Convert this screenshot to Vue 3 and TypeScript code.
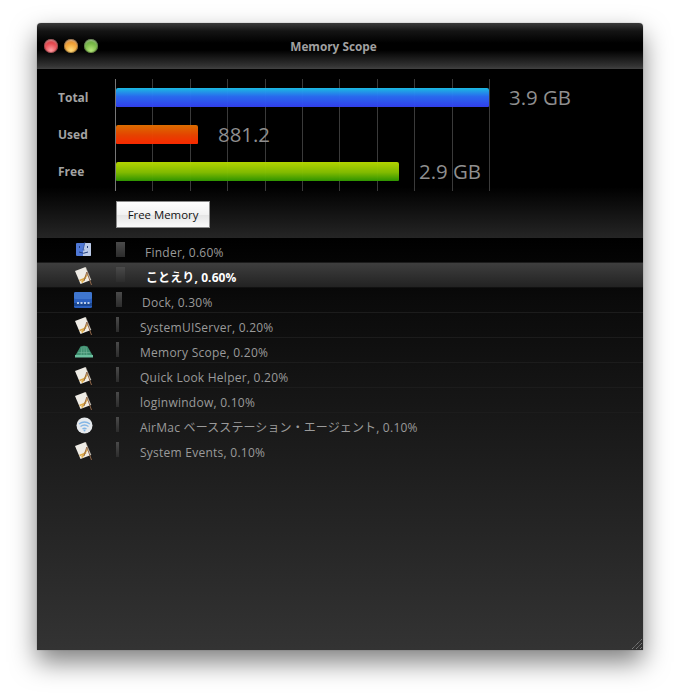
<script setup lang="ts">
interface Row { icon: string; name: string; jp?: string; pct: string; bar: number; pad: number; sel?: boolean }
const rows: Row[] = [
  { icon: 'finder', name: 'Finder', pct: '0.60%', bar: 9, pad: 20 },
  { icon: 'app', name: '', jp: 'ことえり', pct: '0.60%', bar: 9, pad: 21, sel: true },
  { icon: 'dock', name: 'Dock', pct: '0.30%', bar: 6, pad: 20 },
  { icon: 'app', name: 'SystemUIServer', pct: '0.20%', bar: 3, pad: 21 },
  { icon: 'scope', name: 'Memory Scope', pct: '0.20%', bar: 3, pad: 21 },
  { icon: 'app', name: 'Quick Look Helper', pct: '0.20%', bar: 3, pad: 21 },
  { icon: 'app', name: 'loginwindow', pct: '0.10%', bar: 3, pad: 21 },
  { icon: 'airmac', name: 'AirMac ', jp: 'ベースステーション・エージェント', pct: '0.10%', bar: 3, pad: 21 },
  { icon: 'app', name: 'System Events', pct: '0.10%', bar: 3, pad: 21 },
]
const bars = [
  { label: 'Total', cls: 'blue', width: 373, value: '3.9 GB' },
  { label: 'Used', cls: 'red', width: 82, value: '881.2' },
  { label: 'Free', cls: 'green', width: 283, value: '2.9 GB' },
]
const ticks = Array.from({ length: 11 }, (_, i) => i)
const lights = ['r', 'y', 'g']
</script>

<template>
  <div class="page">
    <div class="window">
      <header class="titlebar">
        <div class="lights"><span v-for="l in lights" :key="l" class="light" :class="l"></span></div>
        <div class="title">Memory Scope</div>
      </header>
      <section class="top">
        <div class="chart">
          <div class="labels"><div v-for="b in bars" :key="b.label" class="label">{{ b.label }}</div></div>
          <div class="plot">
            <div class="grid"><i v-for="t in ticks" :key="t" :class="{ first: t === 0 }"></i></div>
            <div class="barrow" v-for="b in bars" :key="b.label">
              <div class="bar" :class="b.cls" :style="{ width: b.width + 'px' }"></div>
              <span class="value">{{ b.value }}</span>
            </div>
          </div>
        </div>
        <button class="btn">Free Memory</button>
      </section>
      <section class="list">
        <div v-for="r in rows" :key="r.name + r.jp" class="row" :class="[{ sel: r.sel }, 'is-' + r.icon]">
          <div class="icon">
            <svg v-if="r.icon === 'finder'" width="15" height="14" viewBox="0 0 15 14">
              <rect x="0" y="1" width="15" height="13" rx="1" fill="#4f78d6"/>
              <path d="M8.500 1H14a1 1 0 0 1 1 1v11a1 1 0 0 1-1 1H7C6.700 10 7.500 5 8.500 1z" fill="#bccbe8"/>
              <path d="M9 0 7 8h1.500" fill="none" stroke="#2b4a94" stroke-width=".8"/>
              <path d="M3.500 4v2M11.500 4v2M3 10q4.500 2.500 9 0" fill="none" stroke="#24407f" stroke-width="1"/>
            </svg>
            <svg v-else-if="r.icon === 'app'" width="20" height="20" viewBox="0 0 20 20">
              <path d="M1 5 11.500 1 17 14 6.500 18z" fill="#efece6"/>
              <path d="M11.500 1 17 14" stroke="#bdb6a8" stroke-width=".5" fill="none"/>
              <path d="M7 16 12.500 8l1.500 1-5.500 8z" fill="#e0b04c"/>
              <path d="M5.500 14.500 12 12" stroke="#d9a644" stroke-width="1.400" fill="none"/>
              <path d="M12.800 6 17.500 19M12.800 6 10 15" fill="none" stroke="#94694a" stroke-width="1"/>
            </svg>
            <svg v-else-if="r.icon === 'dock'" width="18" height="16" viewBox="0 0 18 16">
              <rect x="0" y="0" width="18" height="16" rx="1.500" fill="#2a5fbe"/>
              <rect x="0" y="0" width="18" height="7" rx="1.500" fill="#3f76cf"/>
              <rect x="0" y="11" width="18" height="3" fill="#1c478f"/>
              <path d="M3 10h2v2H3zM6.500 10h2v2h-2zM10 10h2v2h-2zM13.500 10h2v2h-2z" fill="#b9cce8"/>
            </svg>
            <svg v-else-if="r.icon === 'scope'" width="18" height="13" viewBox="0 0 18 13">
              <path d="M0 11 5.500 1.500Q9 0 12.500 1.500L18 11z" fill="#3f8f70"/>
              <path d="M6 11 7 2M9 11V1.500M12 11 11 2M3 7.500h12" stroke="#76b79c" stroke-width=".6" fill="none"/>
              <rect x="0" y="10" width="18" height="2.500" fill="#6bc09f"/>
            </svg>
            <svg v-else width="17" height="17" viewBox="0 0 17 17">
              <circle cx="8.500" cy="8.500" r="8" fill="#e6e9ec"/>
              <path d="M3 7Q8.500 3 14 7M4.500 9.500q4-3 8 0M6.500 12q2-1.500 4 0" fill="none" stroke="#83b6e6" stroke-width="1.300"/>
              <circle cx="8.500" cy="13.500" r="1" fill="#83b6e6"/>
            </svg>
          </div>
          <div class="cell">
            <div class="pbar" :style="{ width: r.bar + 'px' }"></div>
            <div class="text" :style="{ paddingLeft: r.pad + 'px' }">{{ r.name }}<span v-if="r.jp" class="jp">{{ r.jp }}</span>, {{ r.pct }}</div>
          </div>
        </div>
        <svg class="grip" width="12" height="12" viewBox="0 0 12 12">
          <path d="M1 11 11 1M5 11l6-6M9 11l2-2" stroke="#8a8a8a" stroke-width="1" fill="none" stroke-dasharray="1.200 .6"/>
        </svg>
      </section>
    </div>
  </div>
</template>

<style>
html, body { background: #fff; margin: 0; }
</style>

<style scoped>
.page {
  height: 700px;
  padding: 23px 0 0 37px;
  box-sizing: border-box;
  overflow: hidden;
}
.window {
  position: relative;
  width: 606px;
  height: 627px;
  display: flex;
  flex-direction: column;
  border-radius: 4px 4px 0 0;
  box-shadow: 0 12px 26px rgba(0, 0, 0, 0.5), 0 0 1px rgba(0, 0, 0, 0.6);
  font-family: "Open Sans", "Noto Sans CJK JP", sans-serif;
  overflow: hidden;
}
.titlebar {
  height: 46px;
  flex: none;
  display: flex;
  align-items: center;
  position: relative;
  box-sizing: border-box;
  background: linear-gradient(#3a3a3a 0, #141414 8px, #000 20px, #000 27px, #333 43px, #3c3c3c 45px, #444 46px);
}
.lights { display: flex; gap: 6px; padding-left: 7px; }
.light {
  width: 14px;
  height: 14px;
  border-radius: 50%;
  box-shadow: inset 0 0 0 1px rgba(0, 0, 0, 0.3), inset 0 2px 2px rgba(255, 255, 255, 0.45);
}
.light.r { background: radial-gradient(circle at 50% 80%, #ff9da2 0, #e5444b 55%, #a01216 100%); }
.light.y { background: radial-gradient(circle at 50% 80%, #ffdc7c 0, #ee9c30 55%, #a04c0c 100%); }
.light.g { background: radial-gradient(circle at 50% 80%, #b5e57a 0, #72b342 55%, #3c761a 100%); }
.title {
  position: absolute;
  left: 0;
  right: 0;
  top: 15px;
  padding-right: 13px;
  text-align: center;
  font-size: 11.8px;
  font-weight: 700;
  line-height: 16px;
  color: #a0a0a0;
}
.top {
  height: 169px;
  flex: none;
  box-sizing: border-box;
  padding-top: 10px;
  background: linear-gradient(#000 0, #000 118px, #252525 100%);
}
.chart { display: flex; height: 112px; }
.labels {
  width: 78px;
  padding-top: 9px;
  box-sizing: border-box;
  display: flex;
  flex-direction: column;
  gap: 18px;
  flex: none;
}
.label {
  height: 19px;
  line-height: 19px;
  padding-left: 21px;
  font-size: 12px;
  font-weight: 700;
  color: #a3a3a3;
}
.plot {
  position: relative;
  width: 375px;
  padding-top: 9px;
  box-sizing: border-box;
  display: flex;
  flex-direction: column;
  gap: 18px;
}
.grid {
  position: absolute;
  inset: 0;
  display: flex;
  justify-content: space-between;
}
.grid i { width: 1px; background: #3a3a3a; }
.grid i.first { background: #777; }
.barrow {
  position: relative;
  height: 19px;
  display: flex;
  align-items: center;
  padding-left: 1px;
}
.bar { flex: none; height: 19px; box-sizing: border-box; border-radius: 2px 2px 1px 1px; opacity: 0.97; }
.bar.blue { background: linear-gradient(#1cc0ea, #2a6cf5 45%, #3340f2); }
.bar.red { background: linear-gradient(#e27000, #ec4400 55%, #ff2a00); }
.bar.green { background: linear-gradient(#b9da00, #84c000 55%, #2f9800); }
.value {
  margin-left: 20px;
  font-size: 20.4px;
  line-height: 19px;
  color: #8f8f8f;
  white-space: nowrap;
}
.btn {
  display: block;
  margin: 10px 0 0 79px;
  width: 94px;
  height: 27px;
  padding: 0;
  border: 1px solid #8c8c8c;
  border-radius: 0;
  background: linear-gradient(#fff 0, #f2f2f2 50%, #e4e4e4 51%, #fafafa 100%);
  color: #111;
  font-family: "Open Sans", sans-serif;
  font-size: 11.4px;
}
.list {
  position: relative;
  flex: 1;
  background: linear-gradient(#000 0, #0a0a0a 60px, #333 100%);
}
.row {
  height: 25px;
  box-sizing: border-box;
  display: flex;
  border-bottom: 1px solid #1c1c1c;
}
.row:nth-child(n + 8) { border-bottom-color: transparent; }
.row.sel { background: linear-gradient(#3e3e3e, #222); border-bottom-color: #111; }
.icon {
  width: 79px;
  flex: none;
  display: flex;
  justify-content: flex-end;
  align-items: flex-start;
  padding-right: 23px;
  box-sizing: border-box;
  padding-top: 4px;
}
.icon svg { filter: blur(0.3px); flex: none; }
.is-app .icon { padding-top: 3px; padding-right: 22px; }
.is-dock .icon { padding-right: 24px; }
.is-finder .icon { padding-right: 25px; }
.is-scope .icon { padding-top: 7px; padding-right: 23px; }
.cell { display: flex; align-items: center; }
.pbar { flex: none; height: 15px; background: linear-gradient(#4a4a4a, #2c2c2c); margin-top: -1px; }
.text {
  font-size: 12px;
  letter-spacing: 0.25px;
  color: #9a9a9a;
  white-space: nowrap;
  line-height: 16px;
  margin-top: 5px;
}
.jp { letter-spacing: 0.1px; }
.sel .text { color: #fff; font-weight: 700; letter-spacing: 0.1px; }
.grip { position: absolute; right: 0; bottom: 0; }
</style>
